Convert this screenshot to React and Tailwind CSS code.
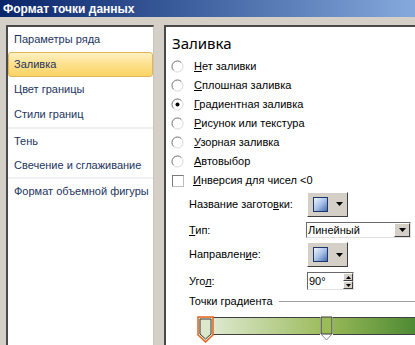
import React from "react";

const U = ({ children }) => <span className="underline decoration-1 underline-offset-[1px]">{children}</span>;

function Radio({ checked }) {
  return (
    <svg width="13" height="13" viewBox="0 0 13 13" className="shrink-0">
      <circle cx="6.5" cy="6.5" r="5.5" fill="white" />
      <path d="M 2.6 10.4 A 5.5 5.5 0 0 1 10.4 2.6" stroke="#6e6e6e" strokeWidth="1" fill="none" />
      <path d="M 10.4 2.6 A 5.5 5.5 0 0 1 2.6 10.4" stroke="#d8d8d8" strokeWidth="1" fill="none" />
      {checked && <circle cx="6.5" cy="6.5" r="2" fill="#000" />}
    </svg>
  );
}

function Tri() {
  return (
    <svg width="7" height="4" viewBox="0 0 7 4">
      <path d="M0 0 H7 L3.5 4 Z" fill="#000" />
    </svg>
  );
}

function GradSquare() {
  return (
    <div className="w-[15px] h-[15px] border border-[#1f3768] bg-gradient-to-br from-[#eef4fc] via-[#a9c2e8] to-[#4a6fb0]" />
  );
}

function PresetButton() {
  return (
    <div className="w-[41px] h-[25px] bg-[#d4d0c8] border-t border-l border-t-white border-l-white border-r border-b border-r-[#404040] border-b-[#404040] flex items-center pl-[5px] gap-[8px]">
      <GradSquare />
      <Tri />
    </div>
  );
}

const leftItem = "h-[25px] flex items-center pl-[6px] text-[#1c3461] whitespace-nowrap";

export default function App() {
  return (
    <div className="w-[415px] h-[345px] overflow-hidden bg-[#d4d0c8] font-['Liberation_Sans',Arial,sans-serif] text-[11px] flex flex-col">
      <div className="h-[17px] shrink-0 bg-gradient-to-r from-[#0a246a] to-[#86a9dd] flex items-center pl-[3px] text-white font-bold text-[12px] leading-none">
        Формат точки данных
      </div>
      <div className="flex pt-[8px] pl-[6px] gap-[10px] flex-1">
        <div className="w-[148px] h-[340px] shrink-0 bg-white border-l-2 border-t-2 border-l-[#4a4a4a] border-t-[#4a4a4a] border-r border-r-[#c9c5bd] flex flex-col">
          <div className={leftItem}>Параметры ряда</div>
          <div className="h-[25px] flex items-center pl-[5px] rounded-[3px] border border-[#e3b45c] bg-gradient-to-b from-[#fff1c2] via-[#fde08a] to-[#fbd466] text-[#1c3461]">
            Заливка
          </div>
          <div className={leftItem}>Цвет границы</div>
          <div className={leftItem}>Стили границ</div>
          <div className="h-[2px] bg-[#eef0f4]" />
          <div className={leftItem}>Тень</div>
          <div className="h-[23px] flex items-center pl-[6px] text-[#1c3461] whitespace-nowrap">Свечение и сглаживание</div>
          <div className="h-[2px] bg-[#eef0f4]" />
          <div className={leftItem}>Формат объемной фигуры</div>
        </div>

        <div className="w-[270px] h-[340px] shrink-0 bg-white border-l-2 border-t-2 border-l-[#4a4a4a] border-t-[#4a4a4a] flex flex-col pt-[6px] text-black">
          <div className="h-[20px] flex items-center pl-[6px] text-[15px] font-['Noto_Sans',sans-serif] leading-none">Заливка</div>
          <div className="mt-[4px] flex flex-col pl-[5px]">
            {[
              [<><U>Н</U>ет заливки</>, false],
              [<><U>С</U>плошная заливка</>, false],
              [<><U>Г</U>радиентная заливка</>, true],
              [<><U>Р</U>исунок или текстура</>, false],
              [<><U>У</U>зорная заливка</>, false],
              [<><U>А</U>втовыбор</>, false],
            ].map(([label, c], i) => (
              <div key={i} className="h-[19px] flex items-center gap-[10px]">
                <Radio checked={c} />
                <span>{label}</span>
              </div>
            ))}
            <div className="h-[19px] flex items-center gap-[10px]">
              <div className="w-[12px] h-[12px] ml-[1px] -mr-[1px] bg-white border-t border-l border-t-[#7a7a7a] border-l-[#7a7a7a] border-r border-b border-r-[#bdbdbd] border-b-[#bdbdbd]" />
              <span><U>И</U>нверсия для чисел &lt;0</span>
            </div>
          </div>

          <div className="pl-[23px] flex flex-col">
            <div className="mt-[1px] h-[26px] flex items-center">
              <span className="w-[118px]">Название загото<U>в</U>ки:</span>
              <PresetButton />
            </div>
            <div className="mt-[5px] h-[16px] flex items-center">
              <span className="w-[117px]"><U>Т</U>ип:</span>
              <div className="w-[105px] h-[16px] bg-white border-t border-l border-t-[#6a6a6a] border-l-[#6a6a6a] border-r border-b border-r-[#e0e0e0] border-b-[#e0e0e0] flex items-center">
                <span className="flex-1 pl-[1px] leading-none">Линейный</span>
                <div className="w-[16px] h-[14px] bg-[#d4d0c8] border-t border-l border-t-white border-l-white border-r border-b border-r-[#404040] border-b-[#404040] flex items-center justify-center">
                  <Tri />
                </div>
              </div>
            </div>
            <div className="mt-[4px] h-[25px] flex items-center">
              <span className="w-[118px]">Направлен<U>и</U>е:</span>
              <PresetButton />
            </div>
            <div className="mt-[5px] h-[18px] flex items-center">
              <span className="w-[118px]">Уго<U>л</U>:</span>
              <div className="w-[47px] h-[18px] bg-white border-t border-l border-t-[#6a6a6a] border-l-[#6a6a6a] border-r border-b border-r-[#e0e0e0] border-b-[#e0e0e0] flex items-center">
                <span className="flex-1 pl-[1px] leading-none">90°</span>
                <div className="w-[10px] h-[16px] flex flex-col">
                  <div className="h-[8px] bg-[#d4d0c8] border-t border-l border-t-white border-l-white border-r border-b border-r-[#404040] border-b-[#404040] flex items-center justify-center">
                    <svg width="5" height="3" viewBox="0 0 5 3"><path d="M0 3 H5 L2.5 0 Z" fill="#000" /></svg>
                  </div>
                  <div className="h-[8px] bg-[#d4d0c8] border-t border-l border-t-white border-l-white border-r border-b border-r-[#404040] border-b-[#404040] flex items-center justify-center">
                    <svg width="5" height="3" viewBox="0 0 5 3"><path d="M0 0 H5 L2.5 3 Z" fill="#000" /></svg>
                  </div>
                </div>
              </div>
            </div>
          </div>

          <div className="mt-[3px] h-[16px] flex items-center pl-[23px] gap-[6px]">
            <span>Точки градиента</span>
            <div className="flex-1 h-px bg-[#a0a0a0]" />
          </div>

          <div className="relative mt-[7px] h-[30px]">
            <div className="absolute left-[37px] top-[1px] w-[245px] h-[18px] border-t border-b border-[#404040] bg-gradient-to-r from-[#e4ecd8] via-[#9bbb59] to-[#2c7826]" />
            <svg className="absolute left-[31px] top-0" width="17" height="27" viewBox="0 0 17 27">
              <path d="M1 1 H16 V19 L8.5 26 L1 19 Z" fill="#dde8cc" stroke="#e8621c" strokeWidth="1.5" />
              <path d="M3 3 H14 V18 L8.5 23 L3 18 Z" fill="#dce7cb" stroke="#3a3a3a" strokeWidth="1" />
            </svg>
            <svg className="absolute left-[153px] top-0" width="15" height="27" viewBox="0 0 15 27">
              <path d="M1.5 1.5 H13.5 V19 L7.5 25 L1.5 19 Z" fill="#ffffff" stroke="#ffffff" strokeWidth="1" />
              <path d="M2 1 H13 V18 H2 Z" fill="#9bbb59" stroke="#3a3a3a" strokeWidth="1" />
              <path d="M2 18 L7.5 24 L13 18" fill="none" stroke="#8a8a8a" strokeWidth="1" />
            </svg>
          </div>
        </div>
      </div>
    </div>
  );
}
